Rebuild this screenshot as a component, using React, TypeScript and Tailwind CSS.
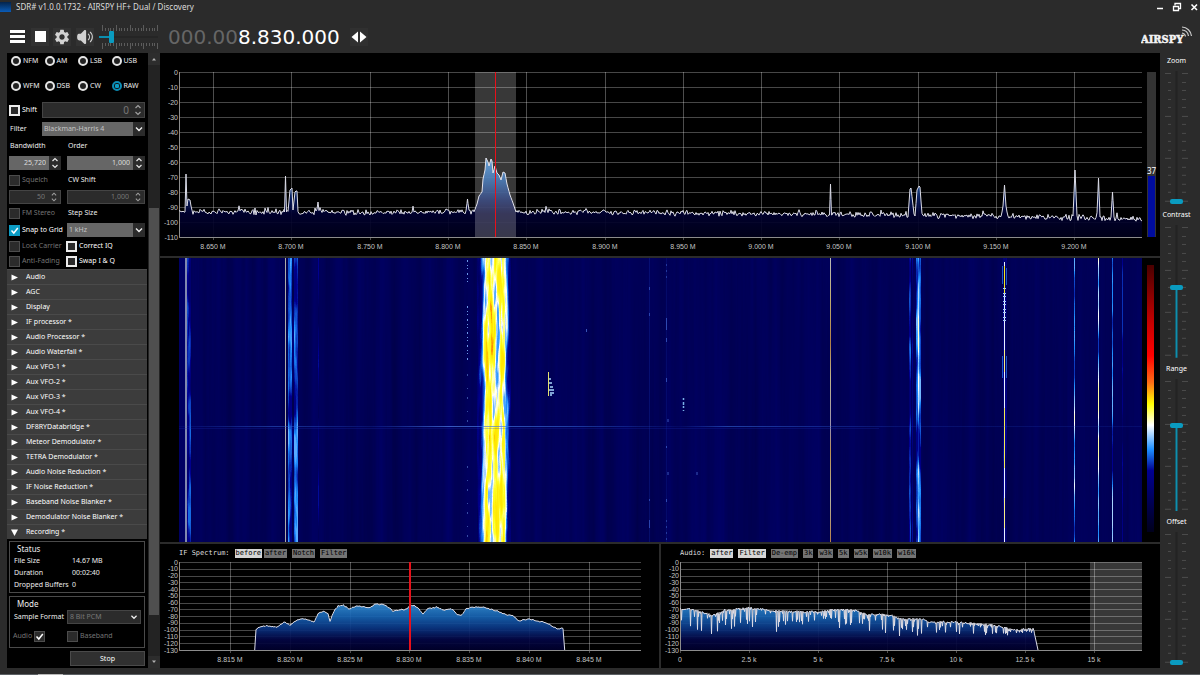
import React from "react";
import { MdSettings } from "react-icons/md";
import { HiSpeakerWave } from "react-icons/hi2";

type Point = [number, number];

const modes = ["NFM", "AM", "LSB", "USB", "WFM", "DSB", "CW", "RAW"];

const plugins = [
  "Audio",
  "AGC",
  "Display",
  "IF processor *",
  "Audio Processor *",
  "Audio Waterfall *",
  "Aux VFO-1 *",
  "Aux VFO-2 *",
  "Aux VFO-3 *",
  "Aux VFO-4 *",
  "DF8RYDatabridge *",
  "Meteor Demodulator *",
  "TETRA Demodulator *",
  "Audio Noise Reduction *",
  "IF Noise Reduction *",
  "Baseband Noise Blanker *",
  "Demodulator Noise Blanker *",
  "Recording *",
];

const recordingStatus = [
  ["File Size", "14.67 MB"],
  ["Duration", "00:02:40"],
  ["Dropped Buffers", "0"],
];

const displaySliders = [
  { label: "Zoom", value: 0 },
  { label: "Contrast", value: 53 },
  { label: "Range", value: 65 },
  { label: "Offset", value: 0 },
];

// small seeded generator, so the traces look the same on every render
function makeRandom(seed: number) {
  let state = seed;
  return () => {
    state = (state * 1664525 + 1013904223) % 4294967296;
    return state / 4294967296;
  };
}

function interpolate(points: Point[], x: number) {
  for (let i = 1; i < points.length; i++) {
    const [x0, y0] = points[i - 1];
    const [x1, y1] = points[i];
    if (x <= x1) return y0 + ((y1 - y0) * (x - x0)) / (x1 - x0 || 1);
  }
  return points[points.length - 1][1];
}

function toPath(points: Point[]) {
  return "M" + points.map(([x, y]) => `${x.toFixed(1)} ${y.toFixed(1)}`).join("L");
}

// carriers on the RF spectrum, each one an outline in plot units
const carriers: Point[][] = [
  [[6, 140], [7, 102], [8, 134], [9, 127], [11, 128], [13, 140]],
  [[105.5, 140], [106.5, 104], [107.5, 140]],
  [[109, 140], [111, 118], [113, 116], [114, 138], [116, 120], [117, 119], [118, 119], [119, 142]],
  [[138, 140], [139, 130], [140, 140]],
  [[287, 140], [288.5, 127], [290, 140]],
  [
    [295, 140], [298, 132], [300, 124], [303, 120], [304, 107], [306, 98], [307, 86], [309, 90],
    [310, 94], [312, 87], [313, 89], [314, 101], [316, 94], [318, 101], [320, 103], [322, 108],
    [324, 100], [326, 101], [328, 112], [331, 123], [334, 131], [337, 140],
  ],
  [[650.5, 143], [651.5, 112], [652.5, 143]],
  [[729, 145], [731, 117], [732, 116], [735, 142]],
  [[736, 145], [738, 118], [740, 114], [741, 115], [743, 143]],
  [[822, 146], [824, 134], [825.5, 113], [827, 134], [829, 146]],
  [[894, 144], [896, 98], [898, 144]],
  [[918, 145], [919.5, 106], [921, 145]],
  [[932, 145], [933.5, 120], [935, 145]],
];

const noiseFloor: Point[] = [[0, 140], [400, 140], [640, 142], [820, 144], [963, 147]];

function rfTrace() {
  const random = makeRandom(11);
  const points: Point[] = [];
  for (let x = 0; x <= 963; x++) {
    const wobble = (random() + random() - 1) * 3.4 - (random() > 0.97 ? 3 : 0);
    let y = interpolate(noiseFloor, x) + wobble;
    carriers.forEach((carrier) => {
      if (x >= carrier[0][0] && x <= carrier[carrier.length - 1][0]) {
        y = Math.min(y, interpolate(carrier, x));
      }
    });
    points.push([x, y]);
    carriers.forEach((carrier) =>
      carrier.forEach(([px, py]) => {
        if (px > x && px < x + 1) points.push([px, py]);
      })
    );
  }
  return points;
}

const ifOutline: Point[] = [
  [75.7, 88], [76.7, 68], [80, 65], [88, 64], [98, 65], [105, 60], [111, 63], [118, 58], [125, 57],
  [135, 60], [139, 52], [144, 49], [149, 52], [151, 59], [155, 49], [159, 44], [164, 43], [170, 47],
  [178, 44], [191, 46], [196, 42], [206, 43], [214, 49], [228, 47], [232, 43], [238, 45], [244, 52],
  [248, 47], [258, 45], [264, 48], [274, 47], [278, 53], [283, 53], [287, 47], [294, 45], [304, 45],
  [318, 49], [328, 53], [334, 54], [340, 59], [349, 57], [368, 61], [378, 67], [384, 66], [385.7, 88],
];

function ifTrace() {
  const random = makeRandom(5);
  const points: Point[] = [ifOutline[0]];
  for (let x = 77; x <= 384; x++) {
    points.push([x, interpolate(ifOutline, x) + (random() - 0.5) * 1.2]);
  }
  points.push([385.7, 88]);
  return points;
}

const audioOutline: Point[] = [
  [0, 47], [10, 47], [31, 53], [40, 51], [45, 48], [71, 46], [93, 49], [136, 50], [150, 48],
  [173, 48], [186, 52], [210, 53], [223, 57], [241, 57], [250, 60], [276, 60], [320, 64],
  [333, 68], [353, 67], [355, 70],
];

function audioTrace() {
  const random = makeRandom(23);
  const points: Point[] = [];
  for (let x = 0; x <= 354; x++) {
    const top = interpolate(audioOutline, x);
    points.push([x, top + (random() - 0.5) * 2]);
    if (random() > 0.45) {
      const room = x < 330 ? Math.min(20, 74 - top) : 3;
      points.push([x + 0.5, top + 1 + room * Math.pow(random(), 2)]);
    }
  }
  points.push([358, 88]);
  return points;
}

const rfPath = toPath(rfTrace());
const ifPath = toPath(ifTrace());
const audioPath = toPath(audioTrace());

type ChartProps = {
  id: string;
  width: number;
  height: number;
  min: number;
  ticks: { at: number; label: string }[];
  trace: string;
  traceStart: number;
  traceEnd: number;
  stops: [number, string][];
  shade: [number, number];
  cursor?: number;
  side?: React.ReactNode;
};

function Chart(props: ChartProps) {
  const { id, width, height, min, ticks, trace, shade, cursor } = props;
  const steps = Array.from({ length: min / 10 + 1 }, (_, i) => i);

  return (
    <div className="flex min-h-0 flex-1 flex-col">
      <div className="flex min-h-0 flex-1">
        <svg className="h-full w-[19px] overflow-visible font-['Liberation_Sans',Arial,sans-serif] text-[7px]">
          {steps.map((i) => (
            <text
              key={i}
              x="18"
              y={`${(i / (steps.length - 1)) * 100}%`}
              textAnchor="end"
              dominantBaseline="central"
              fill="#c4c4c4"
            >
              {i === 0 ? "0" : `-${i * 10}`}
            </text>
          ))}
        </svg>
        <svg
          className="h-full min-w-0 flex-1 overflow-visible"
          viewBox={`0 0 ${width} ${height}`}
          preserveAspectRatio="none"
        >
          <defs>
            <linearGradient id={id} gradientUnits="userSpaceOnUse" x1="0" y1="0" x2="0" y2={height}>
              {props.stops.map(([offset, color]) => (
                <stop key={offset} offset={offset} stopColor={color} />
              ))}
            </linearGradient>
          </defs>
          {steps.map((i) => {
            const y = Math.round((i / (steps.length - 1)) * height) + 0.5;
            return (
              <line key={i} x1="0" x2={width} y1={y} y2={y} stroke="#fff" strokeOpacity="0.28" />
            );
          })}
          {ticks.map((tick) => (
            <line
              key={tick.label}
              x1={tick.at + 0.5}
              x2={tick.at + 0.5}
              y1="0"
              y2={height + 3}
              stroke="#fff"
              strokeOpacity="0.3"
            />
          ))}
          <path
            d={`${trace}L${props.traceEnd} ${height}L${props.traceStart} ${height}Z`}
            fill={`url(#${id})`}
            fillOpacity="0.92"
          />
          <path d={`M0.5 0V${height + 0.5}H${width}`} fill="none" stroke="#8c8c8c" />
          <path d={trace} fill="none" stroke="#dcdce6" strokeWidth="1" strokeLinejoin="round" />
          <rect x={shade[0]} width={shade[1]} height={height} fill="#fff" fillOpacity="0.22" />
          {cursor !== undefined && (
            <rect x={cursor} width={id === "rfFill" ? 1 : 2} height={height} fill="#e8101a" />
          )}
        </svg>
        <div className="w-[18px]">{props.side}</div>
      </div>
      <div className="h-[18px] pr-[18px] pl-[19px]">
        <svg className="h-full w-full overflow-visible font-['Liberation_Sans',Arial,sans-serif] text-[7px]">
          {ticks.map((tick) => (
            <text
              key={tick.label}
              x={`${(tick.at / width) * 100}%`}
              y="9"
              textAnchor="middle"
              dominantBaseline="central"
              fill="#c4c4c4"
            >
              {tick.label}
            </text>
          ))}
        </svg>
      </div>
    </div>
  );
}

const rfTicks = Array.from({ length: 12 }, (_, i) => ({
  at: Math.round(34 + i * 78.3),
  label: `${(8.65 + i * 0.05).toFixed(3)} M`,
}));

const ifTicks = Array.from({ length: 7 }, (_, i) => ({
  at: Math.round(51 + i * 59.8),
  label: `${(8.815 + i * 0.005).toFixed(3)} M`,
}));

const audioTicks = ["0", "2.5 k", "5 k", "7.5 k", "10 k", "12.5 k", "15 k"].map((label, i) => ({
  at: Math.round(i * 69),
  label,
}));

const bottomStops: [number, string][] = [
  [0.45, "#4a9cdc"],
  [0.52, "#2a80ca"],
  [0.62, "#1763b2"],
  [0.75, "#0a3684"],
  [0.88, "#030645"],
  [1, "#00002c"],
];

function SignalMeter() {
  return (
    <div className="ml-[5px] flex h-full w-[9px] flex-col bg-[#333] px-px">
      <div className="flex h-[63%] items-end justify-center">
        <span className="text-[8px] leading-[11px] text-white">37</span>
      </div>
      <div className="flex-1 bg-[#000c9e]" />
    </div>
  );
}

// grey level stands for signal strength, the filter turns it into palette colours
function level(value: number) {
  const grey = Math.round(value * 255);
  return `rgb(${grey},${grey},${grey})`;
}

const streams: [number, number, number][] = [
  [8, 4, 0.21],
  [109, 4, 0.26],
  [113, 2, 0.14],
  [115, 4, 0.25],
  [139, 1, 0.16],
  [730, 2, 0.22],
  [733, 1, 0.16],
  [737, 5, 0.26],
  [739, 1, 0.32],
  [824, 4, 0.17],
  [895, 1, 0.33],
  [919, 1, 0.34],
  [933, 1, 0.28],
  [943, 1, 0.18],
];

function Waterfall() {
  return (
    <div className="flex min-h-0 bg-black pl-[19px]">
      <svg className="h-full min-w-0 flex-1" viewBox="0 0 963 284" preserveAspectRatio="none">
        <defs>
          <filter id="haze" x="0" y="0" width="1" height="1" colorInterpolationFilters="sRGB">
            <feTurbulence type="fractalNoise" baseFrequency="0.09 0.0015" numOctaves="4" seed="9" />
            <feColorMatrix values="0 0 0 0 0  0 0 0 0 0  0.15 0 0 0 0.27  0 0 0 0 1" />
          </filter>
          <filter id="palette" x="0" y="0" width="1" height="1" colorInterpolationFilters="sRGB">
            <feTurbulence type="fractalNoise" baseFrequency="0.19 0.018" numOctaves="3" seed="4" />
            <feColorMatrix
              values="2.6 0 0 0 -0.8  2.6 0 0 0 -0.8  2.6 0 0 0 -0.8  0 0 0 0 1"
              result="noise"
            />
            <feComposite
              in="SourceGraphic"
              in2="noise"
              operator="arithmetic"
              k1="0.6"
              k2="0.7"
              k3="0"
              k4="0"
            />
            <feComponentTransfer>
              <feFuncR type="table" tableValues="0 0 0 0.12 1 1 1 1 0.78 0.62 0.46" />
              <feFuncG type="table" tableValues="0 0 0 0.56 1 1 0.9 0 0 0 0" />
              <feFuncB type="table" tableValues="0.13 0.31 0.57 1 1 0.15 0 0 0 0 0" />
            </feComponentTransfer>
          </filter>
          <linearGradient id="band">
            <stop offset="0" stopColor={level(0.12)} />
            <stop offset="0.1" stopColor={level(0.22)} />
            <stop offset="0.18" stopColor={level(0.34)} />
            <stop offset="0.28" stopColor={level(0.47)} />
            <stop offset="0.45" stopColor={level(0.49)} />
            <stop offset="0.62" stopColor={level(0.44)} />
            <stop offset="0.8" stopColor={level(0.47)} />
            <stop offset="0.87" stopColor={level(0.34)} />
            <stop offset="0.93" stopColor={level(0.22)} />
            <stop offset="1" stopColor={level(0.12)} />
          </linearGradient>
          <linearGradient id="sweep">
            <stop offset="0" stopColor="#2450d0" stopOpacity="0.1" />
            <stop offset="0.1" stopColor="#3468d8" stopOpacity="0.5" />
            <stop offset="0.2" stopColor="#2450d0" stopOpacity="0.2" />
            <stop offset="0.28" stopColor="#5080e8" stopOpacity="0.7" />
            <stop offset="0.4" stopColor="#3468d8" stopOpacity="0.6" />
            <stop offset="0.52" stopColor="#2450d0" stopOpacity="0.1" />
            <stop offset="0.57" stopColor="#3468d8" stopOpacity="0.6" />
            <stop offset="0.75" stopColor="#2450d0" stopOpacity="0.2" />
            <stop offset="1" stopColor="#2450d0" stopOpacity="0.15" />
          </linearGradient>
          <linearGradient id="steady" x2="0" y2="1">
            <stop offset="0" stopColor="#b8b8b8" />
            <stop offset="0.14" stopColor="#c0ae70" />
            <stop offset="0.3" stopColor="#b08048" />
            <stop offset="0.42" stopColor="#c0b488" />
            <stop offset="0.6" stopColor="#9890b0" />
            <stop offset="0.68" stopColor="#bc9050" />
            <stop offset="0.85" stopColor="#b4b09c" />
            <stop offset="1" stopColor="#b88048" />
          </linearGradient>
        </defs>
        <rect width="963" height="284" filter="url(#haze)" />
        <g filter="url(#palette)">
          {streams.map(([x, width, value]) => (
            <rect key={x} x={x} width={width} height="284" fill={level(value)} />
          ))}
          <rect x="298" width="34" height="284" fill="url(#band)" />
        </g>
        <rect width="6" height="284" fill="#000070" fillOpacity="0.6" />
        <rect x="6" width="2" height="284" fill="#8088b0" />
        <rect x="106" width="1" height="284" fill="#b0aca8" />
        <rect x="651" width="1" height="284" fill="url(#steady)" />
        <g stroke="#6c98e8" strokeDasharray="2 3 1 2 1 4">
          <path d="M288.5 2V26M288.5 48V104" />
          <path d="M288.5 116V165M288.5 208V284" strokeOpacity="0.5" strokeDasharray="2 12 1 8" />
        </g>
        <g stroke="#5078e0" strokeOpacity="0.7">
          <path d="M487.5 6V24M487.5 262V284" strokeDasharray="2 4" strokeOpacity="0.5" />
          <path d="M487.5 60V72M487.5 80V84M487.5 120V124M489 161V164M487.5 188V190M489 214V217M487.5 241V244" />
          <path d="M470.5 29V32M470.5 55V58M470.5 241V243M470.5 262V270M518 214V217M407.5 71V74" />
        </g>
        <rect x="470" width="1" height="284" fill="#1028a0" fillOpacity="0.35" />
        <rect x="487" width="1" height="284" fill="#1028a0" fillOpacity="0.25" />
        <path d="M823.5 8V26M827.5 10V27M823.5 98V120M827.5 98V120" stroke="#1c58c8" />
        <rect x="825" y="4" width="1" height="280" fill="#e8f0ff" />
        <rect x="825" y="8" width="1" height="28" fill="#f4e820" />
        <rect x="825" y="92" width="1" height="22" fill="#f8f080" />
        <rect x="825" y="150" width="1" height="60" fill="#f4ec50" />
        <rect x="825" y="240" width="1" height="30" fill="#f8f080" />
        <path d="M825.5 30V64" stroke="#a8ccf8" strokeWidth="3" strokeDasharray="1 4 1 2" />
        <rect y="168" width="963" height="1" fill="url(#sweep)" />
        <rect y="170" width="700" height="1" fill="#1a30b0" fillOpacity="0.25" />
        <path d="M369.5 114V138" stroke="#e4e070" />
        <path
          d="M370 121h2M370 125h3M371 129h3M370 132h5M371 135h4M371 137h2"
          stroke="#a8d8ff"
          strokeWidth="1.5"
        />
        <path d="M504.5 140V153" stroke="#78b0e8" strokeWidth="1.5" strokeDasharray="2 2 3 1" />
      </svg>
      <div className="w-[18px] pt-[7px] pr-1.5 pb-[10px] pl-[5px]">
        <div className="h-full w-[7px] bg-[linear-gradient(to_top,#00001c_0%,#000091_23%,#1e90ff_31%,#fff_40%,#ff0_48%,#fe6d16_56%,#f00_66%,#c60000_78%,#4a0000_100%)]" />
      </div>
    </div>
  );
}

type TagsProps = { title: string; groups: [string, boolean][][] };

function Tags({ title, groups }: TagsProps) {
  return (
    <div className="flex h-[18px] items-center gap-[5px] pl-[19px] font-['DejaVu_Sans_Mono','Liberation_Mono',monospace] text-[7px] leading-[9px] text-[#dedede]">
      <span>{title}</span>
      {groups.map((group) => (
        <div key={group[0][0]} className="flex gap-[2px]">
          {group.map(([tag, active]) => (
            <button
              key={tag}
              type="button"
              className={`px-px text-black ${active ? "bg-[#d6d6d6]" : "bg-[#747474]"}`}
            >
              {tag}
            </button>
          ))}
        </div>
      ))}
    </div>
  );
}

function CheckMark() {
  return (
    <svg className="pointer-events-none absolute size-[11px]" viewBox="0 0 11 11">
      <path d="M2.5 5.5L4.8 8L8.8 3" fill="none" stroke="#fff" strokeWidth="1.5" />
    </svg>
  );
}

type CheckProps = { label: string; disabled?: boolean; checked?: boolean; reverse?: boolean };

function Check({ label, disabled, checked, reverse }: CheckProps) {
  return (
    <label
      className={`flex items-center gap-[2px] whitespace-nowrap ${reverse ? "flex-row-reverse" : ""} ${
        disabled ? "text-[#747474]" : "text-white"
      }`}
    >
      <span className="relative flex">
        <input
          type="checkbox"
          defaultChecked={checked}
          disabled={disabled}
          className={`size-[11px] appearance-none ${
            disabled
              ? "border border-[#4c4c4c] bg-[#2b2b2b]"
              : "border-2 border-[#ececec] bg-[#2b2b2b] checked:border-[#0c9cc4] checked:bg-[#0c9cc4]"
          }`}
        />
        {checked && <CheckMark />}
      </span>
      {label}
    </label>
  );
}

type SpinProps = { label: string; value: string; disabled?: boolean; large?: boolean };

function Spin({ label, value, disabled, large }: SpinProps) {
  return (
    <div
      className={`flex h-full w-full ${
        disabled ? "border border-[#444] bg-[#2b2b2b] text-[#777]" : "bg-[#666] text-[#ddd]"
      }`}
    >
      <input
        type="text"
        aria-label={label}
        defaultValue={value}
        disabled={disabled}
        className={`w-0 min-w-0 flex-1 bg-transparent pr-[3px] text-right ${large ? "text-[10px]" : ""}`}
      />
      <svg className="h-full w-3 bg-[#2b2b2b]" viewBox="0 0 12 14">
        <path
          d="M3.5 5L6 2.5L8.5 5M3.5 9L6 11.5L8.5 9"
          fill="none"
          stroke={disabled ? "#a0a0a0" : "#e8e8e8"}
          strokeWidth="1.2"
        />
      </svg>
    </div>
  );
}

function Picker({ label, value, disabled }: { label: string; value: string; disabled?: boolean }) {
  return (
    <div
      className={`flex h-full flex-1 ${
        disabled ? "border border-[#444] bg-[#2b2b2b] text-[#777]" : "bg-[#666] text-[#c4c4c4]"
      }`}
    >
      <select
        aria-label={label}
        disabled={disabled}
        className="w-0 min-w-0 flex-1 appearance-none bg-transparent pl-[2px] opacity-100"
      >
        <option>{value}</option>
      </select>
      <svg className="pointer-events-none h-full w-3 bg-[#2b2b2b]" viewBox="0 0 12 14">
        <path d="M3 5.5L6 8.5L9 5.5" fill="none" stroke="#f0f0f0" strokeWidth="1.4" />
      </svg>
    </div>
  );
}

function RadioPanel() {
  return (
    <div className="flex flex-col pr-[3px] pl-[2px] text-[#ededed]">
      <div className="grid grid-cols-4 gap-y-[9px] pl-[2px]">
        {modes.map((mode) => (
          <label key={mode} className="flex h-4 items-center gap-[2px] text-[7px]">
            <input
              type="radio"
              name="mode"
              defaultChecked={mode === "RAW"}
              className="size-[10px] shrink-0 appearance-none rounded-full border-2 border-[#e4e4e4] bg-[#222] checked:border-[#0c8cb4] checked:bg-[radial-gradient(#0c9cc4_45%,#111_60%)]"
            />
            {mode}
          </label>
        ))}
      </div>
      <div className="mt-2 flex h-4 items-center">
        <div className="w-[33px]">
          <Check label="Shift" />
        </div>
        <div className="h-full flex-1">
          <Spin label="Shift" value="0" disabled large />
        </div>
      </div>
      <div className="mt-1 flex h-[14px] items-center">
        <span className="w-[33px] pl-px">Filter</span>
        <Picker label="Filter" value="Blackman-Harris 4" />
      </div>
      <div className="mt-[3px] flex h-[14px] items-center">
        <span className="w-[59px] pl-px">Bandwidth</span>
        <span>Order</span>
      </div>
      <div className="mt-[3px] flex h-[14px] gap-[6px]">
        <div className="w-[52px]">
          <Spin label="Bandwidth" value="25,720" />
        </div>
        <div className="flex-1">
          <Spin label="Order" value="1,000" />
        </div>
      </div>
      <div className="mt-[3px] flex h-[14px] items-center">
        <div className="w-[59px]">
          <Check label="Squelch" disabled />
        </div>
        <span>CW Shift</span>
      </div>
      <div className="mt-[3px] flex h-[14px] gap-[6px]">
        <div className="w-[52px]">
          <Spin label="Squelch" value="50" disabled />
        </div>
        <div className="flex-1">
          <Spin label="CW Shift" value="1,000" disabled />
        </div>
      </div>
      <div className="mt-[2px] flex h-[14px] items-center">
        <div className="w-[59px]">
          <Check label="FM Stereo" disabled />
        </div>
        <span>Step Size</span>
      </div>
      <div className="mt-[3px] flex h-[14px] items-center">
        <div className="w-[58px]">
          <Check label="Snap to Grid" checked />
        </div>
        <Picker label="Step Size" value="1 kHz" />
      </div>
      <div className="mt-[2px] flex h-[14px] items-center">
        <div className="w-[57px]">
          <Check label="Lock Carrier" disabled />
        </div>
        <Check label="Correct IQ" />
      </div>
      <div className="mt-px mb-px flex h-[14px] items-center">
        <div className="w-[57px]">
          <Check label="Anti-Fading" disabled />
        </div>
        <Check label="Swap I & Q" />
      </div>
    </div>
  );
}

function RecordingPanel() {
  return (
    <div className="pt-[2px] pr-[3px] pl-[2px]">
      <section className="h-[52px] border border-[#4a4a4a] pt-px pl-1 text-[#ededed]">
        <h3 className="pl-[3px] text-[8px] leading-[12px]">Status</h3>
        <dl className="grid grid-cols-[58px_1fr] leading-[12px]">
          {recordingStatus.map(([name, value]) => (
            <React.Fragment key={name}>
              <dt className="whitespace-nowrap">{name}</dt>
              <dd>{value}</dd>
            </React.Fragment>
          ))}
        </dl>
      </section>
      <section className="mt-[3px] h-[52px] border border-[#4a4a4a] pr-[3px] pl-[3px] text-[#ededed]">
        <h3 className="pl-1 text-[8px] leading-[13px]">Mode</h3>
        <div className="flex h-[14px] items-center">
          <span className="w-[54px] pl-px whitespace-nowrap">Sample Format</span>
          <Picker label="Sample Format" value="8 Bit PCM" disabled />
        </div>
        <div className="mt-[5px] flex h-[14px] items-center">
          <div className="flex w-[54px]">
            <Check label="Audio" disabled checked reverse />
          </div>
          <Check label="Baseband" disabled />
        </div>
      </section>
      <div className="mt-[3px] flex justify-end">
        <button
          type="button"
          className="h-[15px] w-[75px] border border-[#4a4a4a] bg-[#303030] text-white"
        >
          Stop
        </button>
      </div>
    </div>
  );
}

function Sidebar() {
  return (
    <aside className="flex w-[153px] shrink-0 text-[7px] leading-[10px]">
      <div className="min-w-0 flex-1 overflow-hidden bg-black">
        <RadioPanel />
        {plugins.map((plugin, index) => {
          const open = index === plugins.length - 1;
          return (
            <button
              key={plugin}
              type="button"
              aria-expanded={open}
              className="flex h-[15px] w-[140px] items-center gap-2 border-t border-[#4a4a4a] bg-[#3c3c3c] pl-[4px] text-left text-white"
            >
              <svg className="size-[7px]" viewBox="0 0 7 7">
                <path d={open ? "M0 0.5H7L3.5 7Z" : "M0.5 0.5L7 3.5L0.5 6.5Z"} fill="#fff" />
              </svg>
              {plugin}
            </button>
          );
        })}
        <RecordingPanel />
      </div>
      <div className="flex w-3 flex-col items-center bg-[#232323]">
        <svg className="h-3 w-full bg-[#2d2d2d]" viewBox="0 0 12 12">
          <path d="M4 7.5H8L6 5Z" fill="#b0b0b0" />
        </svg>
        <div className="h-[143px]" />
        <div className="w-[10px] flex-1 bg-[#4f4f4f]" />
        <div className="h-[41px]" />
        <svg className="h-3 w-full bg-[#2d2d2d]" viewBox="0 0 12 12">
          <path d="M4 4.5H8L6 7Z" fill="#b0b0b0" />
        </svg>
      </div>
    </aside>
  );
}

function DisplaySlider({ label, value }: { label: string; value: number }) {
  // the scale is 128 units tall, two above the lowest tick
  const thumb = 131 - value * 1.28;

  return (
    <label className="flex min-h-0 flex-1 flex-col items-center pr-[7px] pb-[3px] text-[7px] text-white">
      <span className="h-4 leading-4">{label}</span>
      <span className="relative mt-[2px] block min-h-0 w-full flex-1">
        <svg
          className="absolute inset-0 h-full w-full"
          viewBox="0 0 33 133"
          preserveAspectRatio="none"
        >
          <path d="M16.5 0V133" stroke="#232323" strokeWidth="2" />
          {Array.from({ length: 16 }, (_, i) => {
            const y = Math.round(2 + i * 8.5) + 0.5;
            return (
              <path
                key={i}
                d={i % 5 === 0 ? `M5 ${y}H11M22 ${y}H28` : `M8 ${y}H11M22 ${y}H26`}
                stroke="#4c4c4c"
              />
            );
          })}
          {value > 0 && <path d={`M16.5 ${thumb}V133`} stroke="#0e8fae" strokeWidth="2" />}
        </svg>
        <input
          type="range"
          defaultValue={value}
          className="absolute inset-y-0 left-[10px] m-0 h-full w-[13px] appearance-none bg-transparent [direction:rtl] [writing-mode:vertical-lr] [&::-webkit-slider-thumb]:h-[5px] [&::-webkit-slider-thumb]:w-[13px] [&::-webkit-slider-thumb]:appearance-none [&::-webkit-slider-thumb]:rounded-[2px] [&::-webkit-slider-thumb]:bg-[#0a9bc0]"
        />
      </span>
    </label>
  );
}

function TitleBar() {
  return (
    <header className="flex h-[13px] shrink-0 items-center justify-between">
      <div className="flex items-center gap-[5px]">
        <span className="h-[10px] w-[11px] bg-linear-to-b from-[#04244c] to-[#0a5cb8]" />
        <h1 className="text-[8px] leading-[12px] text-[#dcdcdc]">
          SDR# v1.0.0.1732 - AIRSPY HF+ Dual / Discovery
        </h1>
      </div>
      <div className="flex items-center gap-[7px] pr-[1px]">
        <button type="button" aria-label="Minimize">
          <svg className="size-[10px]" viewBox="0 0 10 10">
            <path d="M2 6.5H8" stroke="#fff" strokeWidth="1.5" />
          </svg>
        </button>
        <button type="button" aria-label="Restore">
          <svg className="size-[10px]" viewBox="0 0 10 10">
            <path d="M3 3.5V1.5H8.5V6.5H7" fill="none" stroke="#fff" strokeWidth="1.3" />
            <path d="M1.5 4.5H6.5V8.5H1.5Z" fill="none" stroke="#fff" strokeWidth="1.3" />
          </svg>
        </button>
        <button type="button" aria-label="Close">
          <svg className="size-[10px]" viewBox="0 0 10 10">
            <path d="M2.5 2.5L8 8M8 2.5L2.5 8" stroke="#fff" strokeWidth="1.6" />
          </svg>
        </button>
      </div>
    </header>
  );
}

function VolumeSlider() {
  return (
    <div className="relative ml-[5px] h-6 w-[59px]">
      <svg className="absolute inset-0 h-full w-full" viewBox="0 0 59 24">
        {Array.from({ length: 21 }, (_, i) => {
          const x = Math.round(3 + i * 2.75) + 0.5;
          const long = i % 5 === 0;
          return (
            <path
              key={i}
              d={`M${x} ${long ? 0 : 3}V6M${x} 18V${long ? 24 : 21}`}
              stroke="#5c5c5c"
            />
          );
        })}
        <path d="M12 12H59" stroke="#252525" strokeWidth="2" />
        <path d="M0 12H12" stroke="#0c8eae" strokeWidth="2" />
      </svg>
      <input
        type="range"
        aria-label="Volume"
        defaultValue={19}
        className="relative block h-full w-full appearance-none bg-transparent [&::-webkit-slider-thumb]:h-3 [&::-webkit-slider-thumb]:w-[5px] [&::-webkit-slider-thumb]:appearance-none [&::-webkit-slider-thumb]:rounded-[1px] [&::-webkit-slider-thumb]:bg-[#0a9bc0]"
      />
    </div>
  );
}

function Toolbar() {
  return (
    <div className="flex h-10 shrink-0 items-center pt-[7px] pl-2">
      <button type="button" aria-label="Menu" className="flex size-[18px] items-center justify-center">
        <svg className="h-[13px] w-[15px]" viewBox="0 0 15 13">
          <path d="M0 1.5H15M0 6.5H15M0 11.5H15" stroke="#fff" strokeWidth="3" />
        </svg>
      </button>
      <button
        type="button"
        aria-label="Stop"
        className="ml-[5px] flex size-[18px] items-center justify-center bg-[#323232]"
      >
        <span className="size-[11px] bg-white" />
      </button>
      <button
        type="button"
        aria-label="Settings"
        className="ml-1 flex size-[18px] items-center justify-center bg-[#323232] text-[#d2d2d2]"
      >
        <MdSettings size={18} />
      </button>
      <button
        type="button"
        aria-label="Mute"
        className="ml-[5px] flex size-[18px] items-center justify-center bg-[#323232] text-[#d2d2d2]"
      >
        <HiSpeakerWave size={18} />
      </button>
      <VolumeSlider />
      <div className="ml-[10px] font-['DejaVu_Sans',Verdana,sans-serif] text-[20px] leading-6 text-white">
        <span className="text-[#666]">000.00</span>
        <span>8.830.000</span>
      </div>
      <button
        type="button"
        aria-label="Tuning step"
        className="ml-[10px] flex size-[18px] items-center justify-center bg-[#303030]"
      >
        <svg className="h-3 w-4" viewBox="0 0 16 12">
          <path d="M7 0.5V11.5L0.5 6ZM9 0.5V11.5L15.5 6Z" fill="#fff" />
        </svg>
      </button>
      <svg className="mr-[7px] mb-1 ml-auto h-[20px] w-[52px]" viewBox="0 0 52 20">
        <text
          x="0"
          y="18"
          fill="#f4f4f4"
          stroke="#f4f4f4"
          strokeWidth="0.5"
          className="font-['DejaVu_Serif_Condensed','DejaVu_Serif',serif] text-[11px] font-bold"
        >
          AIRSPY
        </text>
        <path
          d="M41 8A4 4 0 0 1 44.5 11.5M41 5A7 7 0 0 1 47.5 11M41 2A10 10 0 0 1 50.5 11"
          fill="none"
          stroke="#c8c8c8"
          strokeWidth="1.2"
        />
      </svg>
    </div>
  );
}

export default function App() {
  return (
    <div className="flex h-screen flex-col overflow-hidden bg-[#2b2b2b] font-['Noto_Sans','Open_Sans',sans-serif]">
      <TitleBar />
      <Toolbar />
      <main className="flex min-h-0 flex-1 pl-[7px]">
        <Sidebar />
        <div className="grid min-w-0 flex-1 grid-rows-[203fr_284fr_124fr] gap-[2px]">
          <section className="flex min-h-0 flex-col bg-black pt-[19px] pb-px">
            <Chart
              id="rfFill"
              width={963}
              height={165}
              min={110}
              ticks={rfTicks}
              trace={rfPath}
              traceStart={0}
              traceEnd={963}
              stops={[
                [0.5, "#4a9fe8"],
                [0.65, "#1c5aa4"],
                [0.78, "#06185a"],
                [0.86, "#000030"],
                [1, "#00001a"],
              ]}
              shade={[296, 41]}
              cursor={316}
              side={<SignalMeter />}
            />
          </section>
          <Waterfall />
          <div className="grid min-h-0 grid-cols-2 gap-[2px]">
            <section className="flex min-h-0 min-w-0 flex-col bg-black">
              <Tags
                title="IF Spectrum:"
                groups={[
                  [["before", true], ["after", false]],
                  [["Notch", false]],
                  [["Filter", false]],
                ]}
              />
              <Chart
                id="ifFill"
                width={462}
                height={88}
                min={130}
                ticks={ifTicks}
                trace={ifPath}
                traceStart={76}
                traceEnd={386}
                stops={bottomStops}
                shade={[0, 0]}
                cursor={230}
              />
            </section>
            <section className="flex min-h-0 min-w-0 flex-col bg-black">
              <Tags
                title="Audio:"
                groups={[
                  [["after", true]],
                  [["Filter", true]],
                  [["De-emp", false]],
                  [["3k", false]],
                  [["w3k", false]],
                  [["5k", false]],
                  [["w5k", false]],
                  [["w10k", false]],
                  [["w16k", false]],
                ]}
              />
              <Chart
                id="audioFill"
                width={462}
                height={88}
                min={130}
                ticks={audioTicks}
                trace={audioPath}
                traceStart={0}
                traceEnd={358}
                stops={bottomStops}
                shade={[410, 52]}
              />
            </section>
          </div>
        </div>
        <aside className="flex w-10 shrink-0 flex-col">
          {displaySliders.map((slider) => (
            <DisplaySlider key={slider.label} {...slider} />
          ))}
        </aside>
      </main>
      <footer className="mt-[6px] flex h-px shrink-0 bg-[#5c6064] pl-[38px]">
        <span className="w-[25px] bg-[#b8b8b8]" />
      </footer>
    </div>
  );
}
